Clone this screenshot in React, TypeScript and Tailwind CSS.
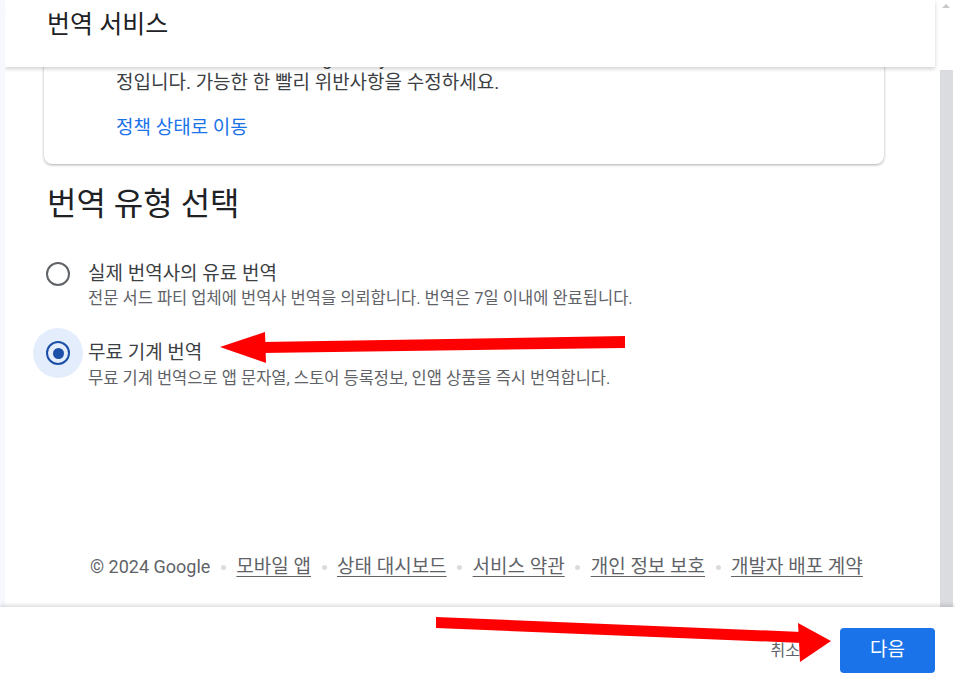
import React from "react";

const KR = "font-['Roboto','Noto_Sans_CJK_KR',sans-serif]";

function Radio({ checked }: { checked: boolean }) {
  return (
    <div
      className={`-mt-[13px] flex h-[50px] w-[50px] shrink-0 items-center justify-center rounded-full ${
        checked ? "bg-[#e4edfb]" : ""
      }`}
    >
      {checked ? (
        <div className="flex h-[24px] w-[24px] items-center justify-center rounded-full border-[2.5px] border-[#1b4fa8]">
          <div className="h-[11px] w-[11px] rounded-full bg-[#1b4fa8]" />
        </div>
      ) : (
        <div className="h-[24px] w-[24px] rounded-full border-[2.5px] border-[#5f6368]" />
      )}
    </div>
  );
}

function Dot() {
  return <span className="mx-[10.5px] inline-block h-[5px] w-[5px] rounded-full bg-[#dadce0]" />;
}

function FooterLink({ children }: { children: React.ReactNode }) {
  return <span className="text-[19px] underline underline-offset-[3px]">{children}</span>;
}

export default function App() {
  return (
    <div className={`relative flex h-[694px] w-[955px] flex-col overflow-hidden bg-white ${KR}`}>
      {/* top area */}
      <div className="flex h-[607px] shrink-0">
        <div className="w-[5px] shrink-0 bg-[#f6f8fd]" />
        <div className="flex flex-1 overflow-hidden rounded-tl-[16px] bg-white">
          <div className="flex flex-1 flex-col">
            <div className="relative z-10 h-[67px] shrink-0 bg-white pl-[42px] pt-[10px] shadow-[0_2px_4px_rgba(0,0,0,0.18)]">
              <h1 className="text-[25px] leading-[30px] text-[#202124]">번역 서비스</h1>
            </div>
            <div className="flex flex-col">
              {/* card (scrolled) */}
              <div className="-mt-[44px] ml-[39px] w-[840px] rounded-[8px] bg-white pb-[24px] pt-[24px] shadow-[0_1px_3px_rgba(60,64,67,0.3),0_1px_2px_rgba(60,64,67,0.15)]">
                <div className="flex">
                  <div className="ml-[21px] mt-[0px] h-[20px] w-[20px] rounded-full bg-[#d93025]" />
                  <div className="ml-[31px] flex flex-col">
                    <p className="text-[19px] leading-[24px] text-[#3c4043]">
                      앱이 정책을 위반하여 Google Play에서 삭제될 예
                    </p>
                    <p className="text-[19px] leading-[24px] text-[#3c4043]">
                      정입니다. 가능한 한 빨리 위반사항을 수정하세요.
                    </p>
                    <p className="mt-[21px] text-[19px] leading-[24px] text-[#1a73e8]">정책 상태로 이동</p>
                  </div>
                </div>
              </div>

              <h2 className="ml-[42px] mt-[20px] text-[32px] leading-[40px] text-[#202124]">번역 유형 선택</h2>

              <div className="ml-[28px] mt-[38px] flex items-start">
                <Radio checked={false} />
                <div className="ml-[5px] flex flex-col">
                  <span className="text-[19px] leading-[24px] text-[#3c4043]">실제 번역사의 유료 번역</span>
                  <span className="mt-[3px] text-[16.5px] leading-[20px] text-[#5f6368]">
                    전문 서드 파티 업체에 번역사 번역을 의뢰합니다. 번역은 7일 이내에 완료됩니다.
                  </span>
                </div>
              </div>

              <div className="ml-[28px] mt-[32px] flex items-start">
                <Radio checked={true} />
                <div className="ml-[5px] flex flex-col">
                  <span className="text-[19px] leading-[24px] text-[#3c4043]">무료 기계 번역</span>
                  <span className="mt-[4px] text-[16.5px] leading-[20px] text-[#5f6368]">
                    무료 기계 번역으로 앱 문자열, 스토어 등록정보, 인앱 상품을 즉시 번역합니다.
                  </span>
                </div>
              </div>

              <div className="ml-[85px] mt-[166px] flex items-center text-[18px] leading-[24px] text-[#5f6368]">
                <span>© 2024 Google</span>
                <Dot />
                <FooterLink>모바일 앱</FooterLink>
                <Dot />
                <FooterLink>상태 대시보드</FooterLink>
                <Dot />
                <FooterLink>서비스 약관</FooterLink>
                <Dot />
                <FooterLink>개인 정보 보호</FooterLink>
                <Dot />
                <FooterLink>개발자 배포 계약</FooterLink>
              </div>
            </div>
          </div>
          {/* scrollbar */}
          <div className="flex w-[20px] shrink-0 flex-col bg-white">
            <div className="ml-[7px] mt-[4px] h-0 w-0 border-x-[4px] border-b-[4px] border-x-transparent border-b-[#c8c9cc]" />
            <div className="ml-[5px] mt-[62px] w-[13px] flex-1 bg-[#dadce0]" />
          </div>
        </div>
      </div>

      {/* bottom bar */}
      <div className="relative z-10 flex flex-1 items-center justify-end bg-white pr-[20px] shadow-[0_-2px_4px_rgba(0,0,0,0.14)]">
        <span className="mr-[40px] text-[16px] text-[#5f6368]">취소</span>
        <button className="h-[45px] w-[95px] rounded-[4px] bg-[#1a73e8] text-[19px] text-white">다음</button>
      </div>

      {/* red annotation arrows */}
      <svg className="pointer-events-none absolute left-0 top-0 z-20" width="955" height="694" viewBox="0 0 955 694">
        <polygon points="625,336 625,348 262,353 262,342" fill="#ff0000" />
        <polygon points="265,332 220,347 266,363" fill="#ff0000" />
        <polygon points="436,617 802,632 802,643 436,628" fill="#ff0000" />
        <polygon points="798,623 831,641 800,662" fill="#ff0000" />
      </svg>
    </div>
  );
}
